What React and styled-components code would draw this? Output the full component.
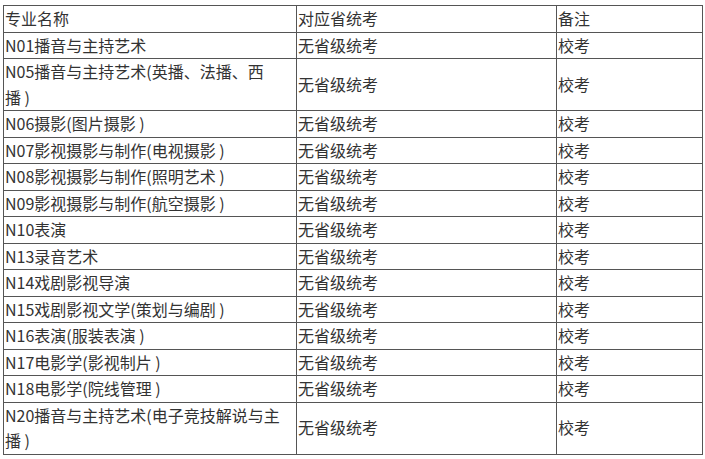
import styled, { createGlobalStyle } from "styled-components";

const GlobalStyle = createGlobalStyle`
  body {
    margin: 0;
    background: #fff;
  }
`;

const Page = styled.div`
  padding: 5px 3px 0 3px;
`;

const Table = styled.table`
  width: 699px;
  border-collapse: collapse;
  table-layout: fixed;
  font-family: "Microsoft YaHei", "Noto Sans CJK SC", "Liberation Sans", sans-serif;
  font-size: 16px;
  line-height: 25.5px;
  color: #333;
`;

const Cell = styled.td`
  border: 1px solid #555;
  padding: 0 0 0 1px;
  vertical-align: middle;
  text-align: left;
  font-weight: normal;
  white-space: pre-line;
  word-break: break-all;
`;

const rows = [
  ["N01播音与主持艺术", "无省级统考", "校考"],
  ["N05播音与主持艺术(英播、法播、西\n播\u00a0)", "无省级统考", "校考"],
  ["N06摄影(图片摄影\u00a0)", "无省级统考", "校考"],
  ["N07影视摄影与制作(电视摄影\u00a0)", "无省级统考", "校考"],
  ["N08影视摄影与制作(照明艺术\u00a0)", "无省级统考", "校考"],
  ["N09影视摄影与制作(航空摄影\u00a0)", "无省级统考", "校考"],
  ["N10表演", "无省级统考", "校考"],
  ["N13录音艺术", "无省级统考", "校考"],
  ["N14戏剧影视导演", "无省级统考", "校考"],
  ["N15戏剧影视文学(策划与编剧\u00a0)", "无省级统考", "校考"],
  ["N16表演(服装表演\u00a0)", "无省级统考", "校考"],
  ["N17电影学(影视制片\u00a0)", "无省级统考", "校考"],
  ["N18电影学(院线管理\u00a0)", "无省级统考", "校考"],
  ["N20播音与主持艺术(电子竞技解说与主\n播\u00a0)", "无省级统考", "校考"],
];

export default function App() {
  return (
    <Page>
      <GlobalStyle />
      <Table>
        <colgroup>
          <col style={{ width: 293 }} />
          <col style={{ width: 260 }} />
          <col style={{ width: 146 }} />
        </colgroup>
        <thead>
          <tr>
            <Cell as="th">专业名称</Cell>
            <Cell as="th">对应省统考</Cell>
            <Cell as="th">备注</Cell>
          </tr>
        </thead>
        <tbody>
          {rows.map((r) => (
            <tr key={r[0]}>
              <Cell>{r[0]}</Cell>
              <Cell>{r[1]}</Cell>
              <Cell>{r[2]}</Cell>
            </tr>
          ))}
        </tbody>
      </Table>
    </Page>
  );
}
